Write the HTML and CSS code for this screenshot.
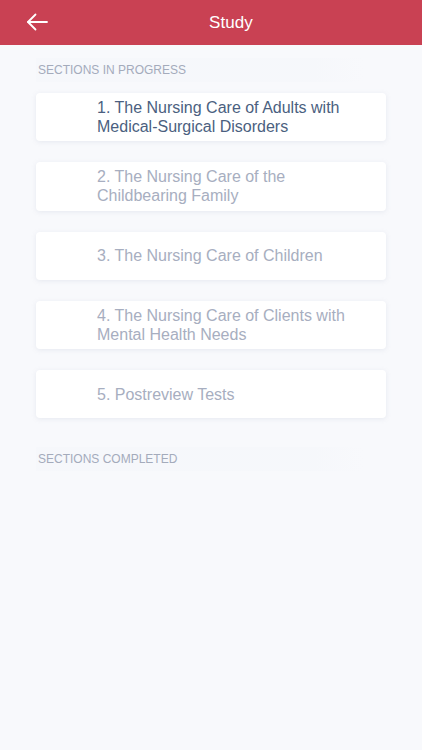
FILE: index.html
```html
<!DOCTYPE html>
<html>
<head>
<meta charset="utf-8">
<link rel="stylesheet" href="styles.css">
</head>
<body>
<header class="topbar">
  <button class="back" aria-label="Back">
    <svg width="22" height="18" viewBox="0 0 22 18" fill="none" stroke="#fff" stroke-width="1.8" stroke-linecap="round" stroke-linejoin="round">
      <path d="M21 9H2"/>
      <path d="M9.5 1.5L2 9l7.5 7.5"/>
    </svg>
  </button>
  <h1 class="title">Study</h1>
</header>
<main class="content">
  <div class="section-label">SECTIONS IN PROGRESS</div>
  <ul class="cards">
    <li class="card active"><span class="card-text">1. The Nursing Care of Adults with Medical-Surgical Disorders</span></li>
    <li class="card"><span class="card-text">2. The Nursing Care of the Childbearing Family</span></li>
    <li class="card"><span class="card-text">3. The Nursing Care of Children</span></li>
    <li class="card"><span class="card-text">4. The Nursing Care of Clients with Mental Health Needs</span></li>
    <li class="card"><span class="card-text">5. Postreview Tests</span></li>
  </ul>
  <div class="section-label completed">SECTIONS COMPLETED</div>
</main>
</body>
</html>
```
FILE: styles.css
```css
* { box-sizing: border-box; }
html, body {
  margin: 0;
  padding: 0;
  background: #f8f9fc;
  font-family: "Liberation Sans", Arial, sans-serif;
  height: 100%;
}
.topbar {
  height: 45px;
  background: #c94153;
  display: flex;
  align-items: center;
  justify-content: center;
  padding-left: 40px;
  position: relative;
}
.back {
  position: absolute;
  left: 26px;
  top: 13px;
  background: none;
  border: 0;
  padding: 0;
  width: 22px;
  height: 18px;
  display: flex;
}
.title {
  margin: 0;
  color: #fff;
  font-size: 17px;
  font-weight: normal;
  letter-spacing: 0.1px;
}
.content {
  padding: 13px 36px 0 36px;
}
.section-label {
  height: 24px;
  line-height: 25px;
  width: 328px;
  padding-left: 2px;
  font-size: 12px;
  color: #a4abbb;
  background: linear-gradient(90deg, rgba(244,246,250,0.5) 0%, rgba(244,246,250,0.5) 85%, rgba(244,246,250,0) 100%);
}
.cards {
  list-style: none;
  margin: 11px 0 0 0;
  padding: 0;
  display: flex;
  flex-direction: column;
  gap: 21px;
}
.card {
  background: #fff;
  border-radius: 4px;
  height: 48.3px;
  display: flex;
  align-items: center;
  padding: 0 30px 0 61px;
  box-shadow: 0 1px 5px rgba(150, 160, 185, 0.18);
}
.card-text {
  font-size: 16px;
  line-height: 19px;
  color: #a7aec0;
}
.card.active .card-text {
  color: #4b5f80;
}
.section-label.completed {
  margin-top: 29px;
}
```
